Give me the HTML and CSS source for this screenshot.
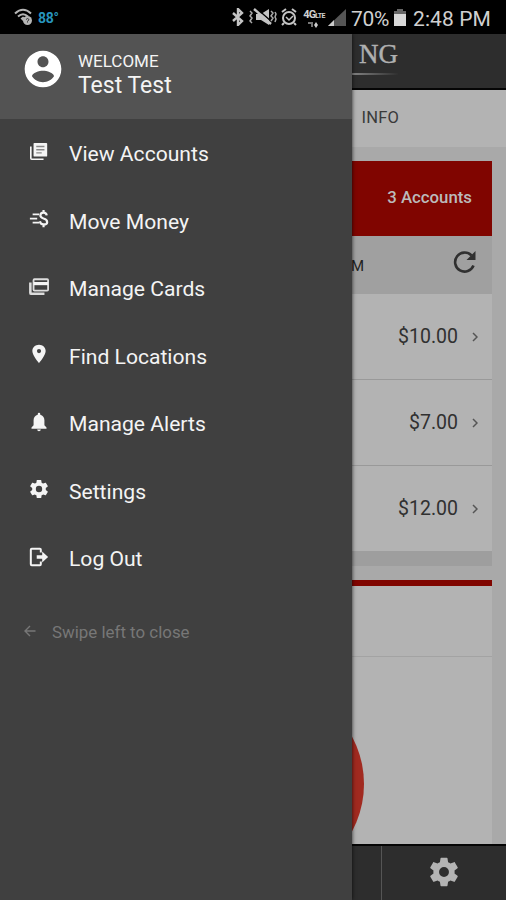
FILE: index.html
```html
<!DOCTYPE html>
<html lang="en">
<head>
<meta charset="utf-8">
<meta name="viewport" content="width=device-width, initial-scale=1.0">
<title>Mobile Banking</title>
<link rel="stylesheet" href="styles.css">
</head>
<body>
<div class="phone">
  <div class="status">
    <svg class="status-wifi" width="19" height="18" viewBox="0 0 19 18">
      <g fill="none" stroke="#b5b5b5" stroke-width="2"><path d="M1 5.500Q9 -2 17 5.500"/><path d="M4 8.500Q9 4 14 8.500"/></g>
      <path d="M6.500 10.500L9 8.500 11 10 9 13z" fill="#b5b5b5"/>
      <circle cx="13.500" cy="12.500" r="4.500" fill="#b5b5b5"/>
      <path d="M12 11.500q1.500-2 3 0l-1.500 2v1" fill="none" stroke="#333"/>
    </svg>
    <span class="status-temp">88°</span>
    <div class="status-right">
      <svg class="status-bt" width="12" height="18" viewBox="0 0 12 18"><path d="M1 5l9 8-4 4V1l4 4-9 8" fill="none" stroke="#c4c4c4" stroke-width="2.400"/></svg>
      <svg class="status-mute" width="28" height="18" viewBox="0 0 28 18">
        <path d="M7 6h5l8-5v16l-8-5H7z" fill="#c4c4c4"/>
        <path d="M7 0l16 14" stroke="#000" stroke-width="1.500"/><path d="M5 1l17 15" stroke="#c4c4c4" stroke-width="2.400"/>
        <path d="M1 3l2 2-2 3 2 2-2 3 2 2M22 3l2 2-2 3 2 2-2 3M26 4l1 2-1 3 1 2-1 3" fill="none" stroke="#aaa" stroke-width="1.500"/>
      </svg>
      <svg class="status-alarm" width="16" height="18" viewBox="0 0 16 18">
        <g fill="none" stroke="#c4c4c4" stroke-width="2"><circle cx="8" cy="10" r="6"/><path d="M1 4l4-3M15 4l-4-3M3 15l-2 2M13 15l2 2"/><path d="M5 9l3 3 4-4" stroke-width="1.500"/></g>
      </svg>
      <div class="status-lte">
        <div><b>4G</b><small>LTE</small></div>
        <svg width="12" height="7" viewBox="0 0 12 7"><path d="M0 0h5v5H3V2H0z" fill="#777"/><path d="M8 0l2 3-2 3-2-3z" fill="#ccc"/></svg>
      </div>
      <svg class="status-signal" width="18" height="17" viewBox="0 0 18 17"><path d="M0 17L18 0v17z" fill="#555"/><path d="M0 17l6-6v6z" fill="#ccc"/></svg>
      <span class="status-pct">70%</span>
      <svg class="status-bat" width="12" height="17" viewBox="0 0 12 17"><path d="M3 0h6v2h3v4H0V2h3z" fill="#666"/><path d="M0 5h12v12H0z" fill="#d8d8d8"/></svg>
      <span class="status-time">2:48 PM</span>
    </div>
  </div>

  <div class="app">
    <div class="topbar"><div class="logo">NG</div></div>
    <div class="tabs"><span>INFO</span></div>
    <div class="content">
      <div class="accounts">
        <div class="accounts-head">3 Accounts</div>
        <div class="accounts-refresh">
          <span>M</span>
          <svg width="24" height="24" viewBox="0 0 24 24"><path d="M20.500 15.500A9.500 9.500 0 1 1 18.500 5.500" fill="none" stroke="#303030" stroke-width="2.600"/><path d="M22.500 1v9h-9z" fill="#303030"/></svg>
        </div>
        <div class="account"><span>$10.00</span><svg width="6" height="10" viewBox="0 0 6 10"><path d="M1 1l4 4-4 4"/></svg></div>
        <div class="account"><span>$7.00</span><svg width="6" height="10" viewBox="0 0 6 10"><path d="M1 1l4 4-4 4"/></svg></div>
        <div class="account"><span>$12.00</span><svg width="6" height="10" viewBox="0 0 6 10"><path d="M1 1l4 4-4 4"/></svg></div>
        <div class="accounts-foot"></div>
      </div>
      <div class="spending">
        <div class="spending-head"></div>
        <div class="pie"></div>
      </div>
    </div>
    <div class="bottombar">
      <div class="bottombar-item">
        <svg width="34" height="34" viewBox="0 0 24 24"><use href="#gear"/></svg>
      </div>
    </div>

    <div class="drawer">
      <div class="profile">
        <svg width="44" height="44" viewBox="0 0 24 24"><path fill="#fff" d="M12 2C6.480 2 2 6.480 2 12s4.480 10 10 10 10-4.480 10-10S17.520 2 12 2zm0 3c1.660 0 3 1.340 3 3s-1.340 3-3 3-3-1.340-3-3 1.340-3 3-3zm0 14.200c-2.500 0-4.710-1.280-6-3.220.03-1.990 4-3.080 6-3.080 1.990 0 5.970 1.090 6 3.080-1.290 1.940-3.500 3.220-6 3.220z"/></svg>
        <div class="profile-text">
          <div class="profile-welcome">WELCOME</div>
          <div class="profile-name">Test Test</div>
        </div>
      </div>
      <div class="menu">
        <a class="menu-item">
          <svg viewBox="0 0 22 22"><path d="M6 1h13q1 0 1 1v13q0 1-1 1H6q-1 0-1-1V2q0-1 1-1z"/><path d="M2 5v13q0 1 1 1h13" fill="none" stroke="#f4f4f4" stroke-width="1.800"/><path d="M8 5h9M8 8.500h9M8 12h6" stroke="#888" stroke-width="1.500"/></svg>
          <span>View Accounts</span>
        </a>
        <a class="menu-item">
          <svg viewBox="0 0 22 22"><g fill="none" stroke="#f4f4f4" stroke-width="2"><path d="M4 6h7M1 10.500h8M4 15h7"/><path d="M19.500 7Q19 4 16 4q-3.500 0-3.500 3 0 2.500 3.500 3.500 4 1 4 4Q20 17 16 17q-3.500 0-4-3.500M16 1v3M16 17v3" stroke-width="2.400"/></g></svg>
          <span>Move Money</span>
        </a>
        <a class="menu-item">
          <svg viewBox="0 0 22 22"><path fill="none" stroke="#ddd" stroke-width="2" d="M6 2.500h14q1 0 1 1v10.500q0 1-1 1H6q-1 0-1-1V3.500q0-1 1-1z"/><path d="M5 5.500h16v3.500H5z"/><path d="M1.500 6v11.500q0 1 1 1H17" fill="none" stroke="#ddd" stroke-width="2.800"/></svg>
          <span>Manage Cards</span>
        </a>
        <a class="menu-item">
          <svg viewBox="0 0 24 24"><path d="M12 1C7.500 1 4 4.300 4 8.500 4 14 12 23 12 23S20 14 20 8.500C20 4.300 16.500 1 12 1zm0 10a2.500 2.500 0 1 1 0-5 2.500 2.500 0 0 1 0 5z"/></svg>
          <span>Find Locations</span>
        </a>
        <a class="menu-item">
          <svg viewBox="0 0 24 24"><path d="M12 23c1.200 0 2.200-1 2.200-2H9.800c0 1 1 2 2.200 2zm6.500-7v-6c0-3.400-1.900-6-5-6.700V2.500a1.500 1.500 0 0 0-3 0v.8c-3.100.7-5 3.300-5 6.700v6L3 18.500v1.500h18v-1.500z"/></svg>
          <span>Manage Alerts</span>
        </a>
        <a class="menu-item">
          <svg viewBox="1 1 22 22"><path id="gear" d="M19.430 12.980c.04-.32.07-.64.07-.98s-.03-.66-.07-.98l2.110-1.650c.19-.15.24-.42.12-.64l-2-3.460c-.12-.22-.39-.3-.61-.22l-2.490 1c-.52-.4-1.080-.73-1.690-.98l-.38-2.650A.49.49 0 0 0 14 2h-4c-.25 0-.46.18-.49.42l-.38 2.650c-.61.25-1.170.59-1.690.98l-2.490-1c-.23-.09-.49 0-.61.22l-2 3.460c-.13.22-.07.49.12.64l2.110 1.650c-.04.32-.07.65-.07.98s.03.66.07.98l-2.110 1.650c-.19.15-.24.42-.12.64l2 3.460c.12.22.39.3.61.22l2.490-1c.52.4 1.080.73 1.690.98l.38 2.650c.03.24.24.42.49.42h4c.25 0 .46-.18.49-.42l.38-2.650c.61-.25 1.170-.59 1.690-.98l2.490 1c.23.09.49 0 .61-.22l2-3.460c.12-.22.07-.49-.12-.64zM12 15.500a3.500 3.500 0 1 1 0-7 3.500 3.500 0 0 1 0 7z"/></svg>
          <span>Settings</span>
        </a>
        <a class="menu-item">
          <svg viewBox="0 0 22 22"><path d="M13 6V3q0-1-1-1H3Q2 2 2 3v16q0 1 1 1h9q1 0 1-1v-3" fill="none" stroke="#f4f4f4" stroke-width="2.200"/><path d="M8.500 9h6V5l6.500 6-6.500 6v-4h-6z"/></svg>
          <span>Log Out</span>
        </a>
      </div>
      <div class="swipe">
        <svg width="12" height="12" viewBox="0 0 12 12"><path d="M6 1L1 6l5 5M1 6h10.500" fill="none" stroke="#777" stroke-width="1.400"/></svg>
        <span>Swipe left to close</span>
      </div>
    </div>
  </div>
</div>
</body>
</html>
```

FILE: styles.css
```css
* { box-sizing: border-box; }
body {
  margin: 0;
  font-family: Roboto, "Liberation Sans", sans-serif;
  background: #000;
}
svg { display: block; flex: none; }
.phone {
  width: 506px; height: 900px;
  overflow: hidden;
  display: flex; flex-direction: column;
}

/* status bar */
.status {
  height: 34px; flex: none;
  padding: 0 15px 0 14px;
  display: flex; align-items: center;
  background: #000; color: #d0d0d0;
}
.status-temp { margin: 2px 0 0 5px; font-size: 14px; font-weight: bold; letter-spacing: -.3px; color: #2795bd; }
.status-right { margin-left: auto; display: flex; align-items: center; }
.status-mute { margin-left: 5px; }
.status-alarm { margin-left: 4px; }
.status-lte {
  width: 24px; height: 18px;
  margin-left: 5px;
  display: flex; flex-direction: column; align-items: center;
  line-height: 9px; white-space: nowrap;
}
.status-lte b { font-size: 11px; letter-spacing: -.8px; }
.status-lte small { font-size: 7px; font-weight: bold; letter-spacing: -.6px; }
.status-lte svg { margin-top: 1px; }
.status-signal { margin-left: 2px; }
.status-pct { margin-left: 5px; width: 41px; font-size: 21px; letter-spacing: -.3px; margin-top: 3px; }
.status-bat { margin-left: 2px; }
.status-time { margin: 3px 0 0 7px; width: 78px; font-size: 21px; letter-spacing: .1px; white-space: nowrap; }

/* page under the drawer */
.app {
  position: relative;
  flex: 1; min-height: 0;
  display: flex; flex-direction: column;
  background: #a9a9a9;
}
.topbar {
  height: 56px; flex: none;
  padding: 5px 108px 0 0;
  display: flex; justify-content: flex-end;
  background: #2d2d2d;
  border-bottom: 2px solid #050505;
}
.logo {
  height: 36px; width: 80px;
  font: 27px/31px "Liberation Serif", serif;
  text-align: right;
  color: #b0b0b0;
  -webkit-text-stroke: .4px #b0b0b0;
  border-bottom: 2px solid;
  border-image: linear-gradient(90deg, #888 40%, #2d2d2d) 1;
}
.tabs {
  height: 57px; flex: none;
  padding: 0 107px 3px 0;
  display: flex; align-items: center; justify-content: flex-end;
  background: #b3b3b3;
  font-size: 16.500px; letter-spacing: .2px; color: #3a3a3a;
}
.content {
  flex: 1; min-height: 0;
  padding: 14px 14px 0;
  display: flex; flex-direction: column; gap: 14px;
}
.accounts-head {
  height: 75px;
  padding: 0 20px 3px 0;
  display: flex; align-items: center; justify-content: flex-end;
  background: #800500;
  font-size: 16.800px; font-weight: 500; color: #bbb;
}
.accounts-refresh {
  height: 58px;
  padding: 0 15px 6px 0;
  display: flex; align-items: center; justify-content: flex-end; gap: 89px;
  background: #a0a0a0;
  font-size: 15px; color: #222;
}
.accounts-refresh span { margin-top: 8px; }
.account {
  height: 86px;
  padding: 0 14px 0 0;
  display: flex; align-items: center; justify-content: flex-end; gap: 14px;
  background: #b3b3b3;
  border-bottom: 1px solid #999;
  font-size: 19.500px; color: #303030;
}
.account path { fill: none; stroke: #555; stroke-width: 1.500; }
.accounts-foot { height: 15px; margin-top: -1px; background: #9e9e9e; }
.spending {
  flex: 1;
  overflow: hidden;
  border-top: 6px solid #800500;
  background: #b3b3b3;
}
.spending-head { height: 71px; border-bottom: 1px solid #a3a3a3; }
.pie {
  width: 200px; height: 200px;
  margin: 27px 0 0 150px;
  border-radius: 50%;
  background: #a12a20;
}
.bottombar {
  height: 56px; flex: none;
  display: flex; justify-content: flex-end;
  background: #2d2d2d;
  border-top: 2px solid #050505;
}
.bottombar-item {
  width: 125px;
  padding-bottom: 2px;
  display: flex; align-items: center; justify-content: center;
  border-left: 1px solid #555;
  fill: #b3b3b3;
}

/* drawer */
.drawer {
  position: absolute; top: 0; bottom: 0; left: 0;
  width: 352px;
  background: #404040;
  box-shadow: 0 0 4px rgba(0, 0, 0, .8);
  color: #f4f4f4;
}
.profile {
  height: 85px;
  padding: 13px 0 0 21px;
  display: flex; gap: 13px;
  background: #535353;
}
.profile-text { padding-top: 4px; }
.profile-welcome { font-size: 17px; line-height: 20px; letter-spacing: 0; }
.profile-name { font-size: 23px; line-height: 30px; }
.menu-item {
  height: 67.500px;
  padding-left: 29px;
  display: flex; align-items: center; gap: 20px;
  font-size: 21.100px;
}
.menu-item svg { width: 20px; height: 20px; margin-top: -2px; fill: #f4f4f4; }
.menu-item span { padding-top: 2px; }
.swipe {
  height: 40px;
  margin-top: 20px;
  padding-left: 24px;
  display: flex; align-items: center; gap: 16px;
  font-size: 16.900px; color: #777;
}
.swipe svg { margin-top: -2px; }
```
